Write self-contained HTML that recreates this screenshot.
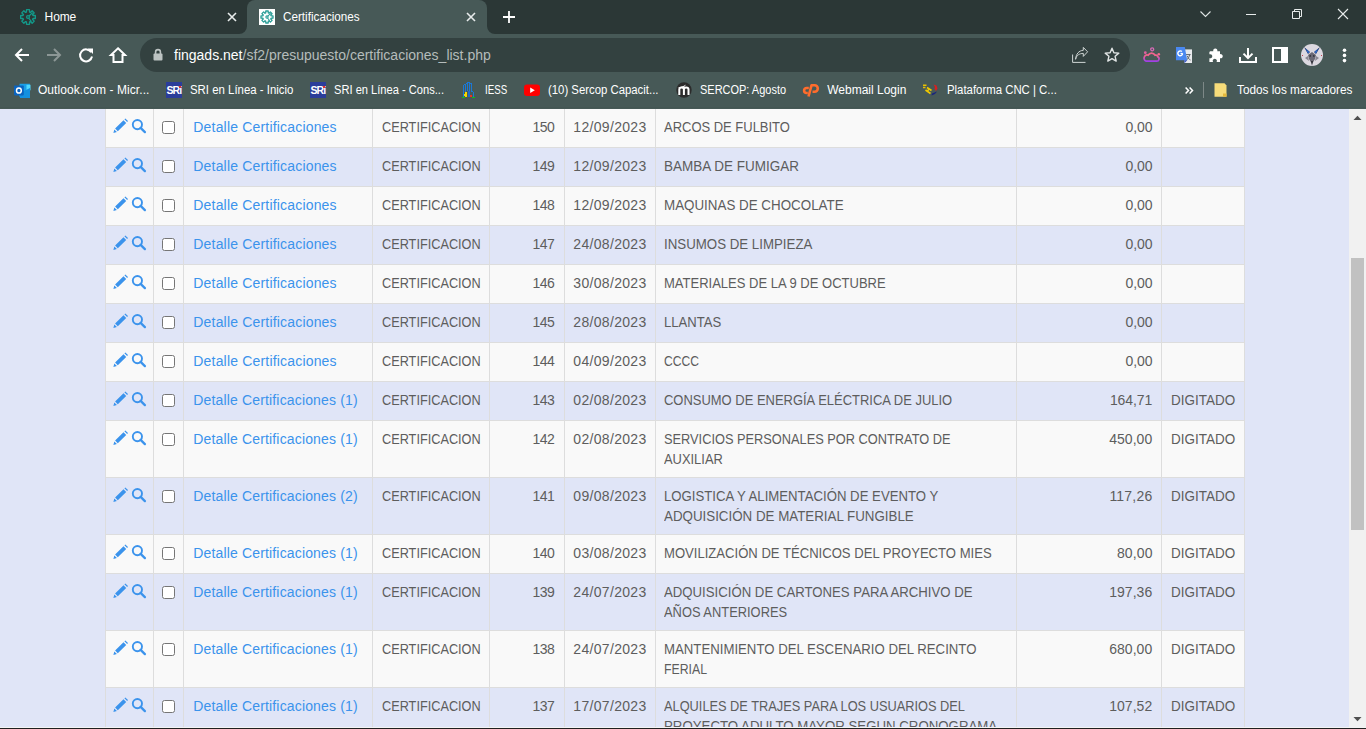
<!DOCTYPE html><html><head><meta charset="utf-8"><style>
*{margin:0;padding:0;box-sizing:border-box}
html,body{width:1366px;height:729px;overflow:hidden;background:#e0e5f7;font-family:"Liberation Sans",sans-serif}
.a{position:absolute}
.t{position:absolute;white-space:nowrap;line-height:20px;font-size:14px;color:#5d5d5d}
.u{position:absolute;white-space:nowrap;font-size:12px;line-height:16px;color:#fff}
svg{position:absolute;overflow:visible}
</style></head><body>

<div class="a" style="left:105px;top:108px;width:1140px;height:39px;background:#f9f9f9"></div>
<div class="a" style="left:105px;top:108px;width:1140px;height:1px;background:#dddddd"></div>
<div class="a" style="left:105px;top:147px;width:1140px;height:39px;background:#e0e5f7"></div>
<div class="a" style="left:105px;top:147px;width:1140px;height:1px;background:#dddddd"></div>
<div class="a" style="left:105px;top:186px;width:1140px;height:39px;background:#f9f9f9"></div>
<div class="a" style="left:105px;top:186px;width:1140px;height:1px;background:#dddddd"></div>
<div class="a" style="left:105px;top:225px;width:1140px;height:39px;background:#e0e5f7"></div>
<div class="a" style="left:105px;top:225px;width:1140px;height:1px;background:#dddddd"></div>
<div class="a" style="left:105px;top:264px;width:1140px;height:39px;background:#f9f9f9"></div>
<div class="a" style="left:105px;top:264px;width:1140px;height:1px;background:#dddddd"></div>
<div class="a" style="left:105px;top:303px;width:1140px;height:39px;background:#e0e5f7"></div>
<div class="a" style="left:105px;top:303px;width:1140px;height:1px;background:#dddddd"></div>
<div class="a" style="left:105px;top:342px;width:1140px;height:39px;background:#f9f9f9"></div>
<div class="a" style="left:105px;top:342px;width:1140px;height:1px;background:#dddddd"></div>
<div class="a" style="left:105px;top:381px;width:1140px;height:39px;background:#e0e5f7"></div>
<div class="a" style="left:105px;top:381px;width:1140px;height:1px;background:#dddddd"></div>
<div class="a" style="left:105px;top:420px;width:1140px;height:57px;background:#f9f9f9"></div>
<div class="a" style="left:105px;top:420px;width:1140px;height:1px;background:#dddddd"></div>
<div class="a" style="left:105px;top:477px;width:1140px;height:57px;background:#e0e5f7"></div>
<div class="a" style="left:105px;top:477px;width:1140px;height:1px;background:#dddddd"></div>
<div class="a" style="left:105px;top:534px;width:1140px;height:39px;background:#f9f9f9"></div>
<div class="a" style="left:105px;top:534px;width:1140px;height:1px;background:#dddddd"></div>
<div class="a" style="left:105px;top:573px;width:1140px;height:57px;background:#e0e5f7"></div>
<div class="a" style="left:105px;top:573px;width:1140px;height:1px;background:#dddddd"></div>
<div class="a" style="left:105px;top:630px;width:1140px;height:57px;background:#f9f9f9"></div>
<div class="a" style="left:105px;top:630px;width:1140px;height:1px;background:#dddddd"></div>
<div class="a" style="left:105px;top:687px;width:1140px;height:57px;background:#e0e5f7"></div>
<div class="a" style="left:105px;top:687px;width:1140px;height:1px;background:#dddddd"></div>
<div class="a" style="left:105px;top:108px;width:1px;height:640px;background:#dddddd"></div>
<div class="a" style="left:153px;top:108px;width:1px;height:640px;background:#dddddd"></div>
<div class="a" style="left:183px;top:108px;width:1px;height:640px;background:#dddddd"></div>
<div class="a" style="left:372px;top:108px;width:1px;height:640px;background:#dddddd"></div>
<div class="a" style="left:489px;top:108px;width:1px;height:640px;background:#dddddd"></div>
<div class="a" style="left:564px;top:108px;width:1px;height:640px;background:#dddddd"></div>
<div class="a" style="left:655px;top:108px;width:1px;height:640px;background:#dddddd"></div>
<div class="a" style="left:1016px;top:108px;width:1px;height:640px;background:#dddddd"></div>
<div class="a" style="left:1161px;top:108px;width:1px;height:640px;background:#dddddd"></div>
<div class="a" style="left:1244px;top:108px;width:1px;height:640px;background:#dddddd"></div>
<svg style="left:113px;top:119px" width="15" height="15" viewBox="0 0 15 15"><g transform="translate(0,-0.6)"><path d="M0.4 14.6 L1.3 11.1 L3.9 13.7 Z M2.1 10.2 L10.5 1.8 L13.2 4.5 L4.8 12.9 Z M11.4 0.9 L12.3 0 L15 2.7 L14.1 3.6 Z" fill="#3b93ec"/></g></svg>
<svg style="left:131px;top:119px" width="15" height="15" viewBox="0 0 15 15"><circle cx="6.4" cy="5.6" r="4.6" fill="none" stroke="#3b93ec" stroke-width="1.9"/><path d="M9.6 8.9 L13.9 13.1" stroke="#3b93ec" stroke-width="2.3" stroke-linecap="round"/></svg>
<div class="a" style="left:162px;top:121px;width:13px;height:13px;border:1px solid #767676;border-radius:2.5px;background:#fff"></div>
<div class="t" style="left:193.30px;top:117.15px;font-size:14px;line-height:20px;letter-spacing:0.182px;color:#3b93ec;">Detalle Certificaciones</div>
<div class="t" style="left:381.50px;top:117.15px;font-size:14px;line-height:20px;transform:scaleX(0.9083);transform-origin:0.00px 0;">CERTIFICACION</div>
<div class="t" style="left:532.40px;top:117.15px;font-size:14px;line-height:20px;letter-spacing:-0.500px;">150</div>
<div class="t" style="left:573.30px;top:117.15px;font-size:14px;line-height:20px;letter-spacing:0.322px;">12/09/2023</div>
<div class="t" style="left:664.30px;top:117.15px;font-size:14px;line-height:20px;transform:scaleX(0.9265);transform-origin:0.00px 0;">ARCOS DE FULBITO</div>
<div class="t" style="left:1125.40px;top:117.15px;font-size:14px;line-height:20px;">0,00</div>
<svg style="left:113px;top:158px" width="15" height="15" viewBox="0 0 15 15"><g transform="translate(0,-0.6)"><path d="M0.4 14.6 L1.3 11.1 L3.9 13.7 Z M2.1 10.2 L10.5 1.8 L13.2 4.5 L4.8 12.9 Z M11.4 0.9 L12.3 0 L15 2.7 L14.1 3.6 Z" fill="#3b93ec"/></g></svg>
<svg style="left:131px;top:158px" width="15" height="15" viewBox="0 0 15 15"><circle cx="6.4" cy="5.6" r="4.6" fill="none" stroke="#3b93ec" stroke-width="1.9"/><path d="M9.6 8.9 L13.9 13.1" stroke="#3b93ec" stroke-width="2.3" stroke-linecap="round"/></svg>
<div class="a" style="left:162px;top:160px;width:13px;height:13px;border:1px solid #767676;border-radius:2.5px;background:#fff"></div>
<div class="t" style="left:193.30px;top:156.15px;font-size:14px;line-height:20px;letter-spacing:0.182px;color:#3b93ec;">Detalle Certificaciones</div>
<div class="t" style="left:381.50px;top:156.15px;font-size:14px;line-height:20px;transform:scaleX(0.9083);transform-origin:0.00px 0;">CERTIFICACION</div>
<div class="t" style="left:532.40px;top:156.15px;font-size:14px;line-height:20px;letter-spacing:-0.500px;">149</div>
<div class="t" style="left:573.30px;top:156.15px;font-size:14px;line-height:20px;letter-spacing:0.322px;">12/09/2023</div>
<div class="t" style="left:664.30px;top:156.15px;font-size:14px;line-height:20px;transform:scaleX(0.9643);transform-origin:0.00px 0;">BAMBA DE FUMIGAR</div>
<div class="t" style="left:1125.40px;top:156.15px;font-size:14px;line-height:20px;">0,00</div>
<svg style="left:113px;top:197px" width="15" height="15" viewBox="0 0 15 15"><g transform="translate(0,-0.6)"><path d="M0.4 14.6 L1.3 11.1 L3.9 13.7 Z M2.1 10.2 L10.5 1.8 L13.2 4.5 L4.8 12.9 Z M11.4 0.9 L12.3 0 L15 2.7 L14.1 3.6 Z" fill="#3b93ec"/></g></svg>
<svg style="left:131px;top:197px" width="15" height="15" viewBox="0 0 15 15"><circle cx="6.4" cy="5.6" r="4.6" fill="none" stroke="#3b93ec" stroke-width="1.9"/><path d="M9.6 8.9 L13.9 13.1" stroke="#3b93ec" stroke-width="2.3" stroke-linecap="round"/></svg>
<div class="a" style="left:162px;top:199px;width:13px;height:13px;border:1px solid #767676;border-radius:2.5px;background:#fff"></div>
<div class="t" style="left:193.30px;top:195.15px;font-size:14px;line-height:20px;letter-spacing:0.182px;color:#3b93ec;">Detalle Certificaciones</div>
<div class="t" style="left:381.50px;top:195.15px;font-size:14px;line-height:20px;transform:scaleX(0.9083);transform-origin:0.00px 0;">CERTIFICACION</div>
<div class="t" style="left:532.40px;top:195.15px;font-size:14px;line-height:20px;letter-spacing:-0.500px;">148</div>
<div class="t" style="left:573.30px;top:195.15px;font-size:14px;line-height:20px;letter-spacing:0.322px;">12/09/2023</div>
<div class="t" style="left:664.30px;top:195.15px;font-size:14px;line-height:20px;transform:scaleX(0.9553);transform-origin:0.00px 0;">MAQUINAS DE CHOCOLATE</div>
<div class="t" style="left:1125.40px;top:195.15px;font-size:14px;line-height:20px;">0,00</div>
<svg style="left:113px;top:236px" width="15" height="15" viewBox="0 0 15 15"><g transform="translate(0,-0.6)"><path d="M0.4 14.6 L1.3 11.1 L3.9 13.7 Z M2.1 10.2 L10.5 1.8 L13.2 4.5 L4.8 12.9 Z M11.4 0.9 L12.3 0 L15 2.7 L14.1 3.6 Z" fill="#3b93ec"/></g></svg>
<svg style="left:131px;top:236px" width="15" height="15" viewBox="0 0 15 15"><circle cx="6.4" cy="5.6" r="4.6" fill="none" stroke="#3b93ec" stroke-width="1.9"/><path d="M9.6 8.9 L13.9 13.1" stroke="#3b93ec" stroke-width="2.3" stroke-linecap="round"/></svg>
<div class="a" style="left:162px;top:238px;width:13px;height:13px;border:1px solid #767676;border-radius:2.5px;background:#fff"></div>
<div class="t" style="left:193.30px;top:234.15px;font-size:14px;line-height:20px;letter-spacing:0.182px;color:#3b93ec;">Detalle Certificaciones</div>
<div class="t" style="left:381.50px;top:234.15px;font-size:14px;line-height:20px;transform:scaleX(0.9083);transform-origin:0.00px 0;">CERTIFICACION</div>
<div class="t" style="left:532.40px;top:234.15px;font-size:14px;line-height:20px;letter-spacing:-0.500px;">147</div>
<div class="t" style="left:573.30px;top:234.15px;font-size:14px;line-height:20px;letter-spacing:0.322px;">24/08/2023</div>
<div class="t" style="left:664.30px;top:234.15px;font-size:14px;line-height:20px;transform:scaleX(0.9490);transform-origin:0.00px 0;">INSUMOS DE LIMPIEZA</div>
<div class="t" style="left:1125.40px;top:234.15px;font-size:14px;line-height:20px;">0,00</div>
<svg style="left:113px;top:275px" width="15" height="15" viewBox="0 0 15 15"><g transform="translate(0,-0.6)"><path d="M0.4 14.6 L1.3 11.1 L3.9 13.7 Z M2.1 10.2 L10.5 1.8 L13.2 4.5 L4.8 12.9 Z M11.4 0.9 L12.3 0 L15 2.7 L14.1 3.6 Z" fill="#3b93ec"/></g></svg>
<svg style="left:131px;top:275px" width="15" height="15" viewBox="0 0 15 15"><circle cx="6.4" cy="5.6" r="4.6" fill="none" stroke="#3b93ec" stroke-width="1.9"/><path d="M9.6 8.9 L13.9 13.1" stroke="#3b93ec" stroke-width="2.3" stroke-linecap="round"/></svg>
<div class="a" style="left:162px;top:277px;width:13px;height:13px;border:1px solid #767676;border-radius:2.5px;background:#fff"></div>
<div class="t" style="left:193.30px;top:273.15px;font-size:14px;line-height:20px;letter-spacing:0.182px;color:#3b93ec;">Detalle Certificaciones</div>
<div class="t" style="left:381.50px;top:273.15px;font-size:14px;line-height:20px;transform:scaleX(0.9083);transform-origin:0.00px 0;">CERTIFICACION</div>
<div class="t" style="left:532.40px;top:273.15px;font-size:14px;line-height:20px;letter-spacing:-0.500px;">146</div>
<div class="t" style="left:573.30px;top:273.15px;font-size:14px;line-height:20px;letter-spacing:0.322px;">30/08/2023</div>
<div class="t" style="left:664.30px;top:273.15px;font-size:14px;line-height:20px;transform:scaleX(0.9289);transform-origin:0.00px 0;">MATERIALES DE LA 9 DE OCTUBRE</div>
<div class="t" style="left:1125.40px;top:273.15px;font-size:14px;line-height:20px;">0,00</div>
<svg style="left:113px;top:314px" width="15" height="15" viewBox="0 0 15 15"><g transform="translate(0,-0.6)"><path d="M0.4 14.6 L1.3 11.1 L3.9 13.7 Z M2.1 10.2 L10.5 1.8 L13.2 4.5 L4.8 12.9 Z M11.4 0.9 L12.3 0 L15 2.7 L14.1 3.6 Z" fill="#3b93ec"/></g></svg>
<svg style="left:131px;top:314px" width="15" height="15" viewBox="0 0 15 15"><circle cx="6.4" cy="5.6" r="4.6" fill="none" stroke="#3b93ec" stroke-width="1.9"/><path d="M9.6 8.9 L13.9 13.1" stroke="#3b93ec" stroke-width="2.3" stroke-linecap="round"/></svg>
<div class="a" style="left:162px;top:316px;width:13px;height:13px;border:1px solid #767676;border-radius:2.5px;background:#fff"></div>
<div class="t" style="left:193.30px;top:312.15px;font-size:14px;line-height:20px;letter-spacing:0.182px;color:#3b93ec;">Detalle Certificaciones</div>
<div class="t" style="left:381.50px;top:312.15px;font-size:14px;line-height:20px;transform:scaleX(0.9083);transform-origin:0.00px 0;">CERTIFICACION</div>
<div class="t" style="left:532.40px;top:312.15px;font-size:14px;line-height:20px;letter-spacing:-0.500px;">145</div>
<div class="t" style="left:573.30px;top:312.15px;font-size:14px;line-height:20px;letter-spacing:0.322px;">28/08/2023</div>
<div class="t" style="left:664.30px;top:312.15px;font-size:14px;line-height:20px;transform:scaleX(0.9344);transform-origin:0.00px 0;">LLANTAS</div>
<div class="t" style="left:1125.40px;top:312.15px;font-size:14px;line-height:20px;">0,00</div>
<svg style="left:113px;top:353px" width="15" height="15" viewBox="0 0 15 15"><g transform="translate(0,-0.6)"><path d="M0.4 14.6 L1.3 11.1 L3.9 13.7 Z M2.1 10.2 L10.5 1.8 L13.2 4.5 L4.8 12.9 Z M11.4 0.9 L12.3 0 L15 2.7 L14.1 3.6 Z" fill="#3b93ec"/></g></svg>
<svg style="left:131px;top:353px" width="15" height="15" viewBox="0 0 15 15"><circle cx="6.4" cy="5.6" r="4.6" fill="none" stroke="#3b93ec" stroke-width="1.9"/><path d="M9.6 8.9 L13.9 13.1" stroke="#3b93ec" stroke-width="2.3" stroke-linecap="round"/></svg>
<div class="a" style="left:162px;top:355px;width:13px;height:13px;border:1px solid #767676;border-radius:2.5px;background:#fff"></div>
<div class="t" style="left:193.30px;top:351.15px;font-size:14px;line-height:20px;letter-spacing:0.182px;color:#3b93ec;">Detalle Certificaciones</div>
<div class="t" style="left:381.50px;top:351.15px;font-size:14px;line-height:20px;transform:scaleX(0.9083);transform-origin:0.00px 0;">CERTIFICACION</div>
<div class="t" style="left:532.40px;top:351.15px;font-size:14px;line-height:20px;letter-spacing:-0.500px;">144</div>
<div class="t" style="left:573.30px;top:351.15px;font-size:14px;line-height:20px;letter-spacing:0.322px;">04/09/2023</div>
<div class="t" style="left:664.30px;top:351.15px;font-size:14px;line-height:20px;transform:scaleX(0.8625);transform-origin:0.00px 0;">CCCC</div>
<div class="t" style="left:1125.40px;top:351.15px;font-size:14px;line-height:20px;">0,00</div>
<svg style="left:113px;top:392px" width="15" height="15" viewBox="0 0 15 15"><g transform="translate(0,-0.6)"><path d="M0.4 14.6 L1.3 11.1 L3.9 13.7 Z M2.1 10.2 L10.5 1.8 L13.2 4.5 L4.8 12.9 Z M11.4 0.9 L12.3 0 L15 2.7 L14.1 3.6 Z" fill="#3b93ec"/></g></svg>
<svg style="left:131px;top:392px" width="15" height="15" viewBox="0 0 15 15"><circle cx="6.4" cy="5.6" r="4.6" fill="none" stroke="#3b93ec" stroke-width="1.9"/><path d="M9.6 8.9 L13.9 13.1" stroke="#3b93ec" stroke-width="2.3" stroke-linecap="round"/></svg>
<div class="a" style="left:162px;top:394px;width:13px;height:13px;border:1px solid #767676;border-radius:2.5px;background:#fff"></div>
<div class="t" style="left:193.30px;top:390.15px;font-size:14px;line-height:20px;letter-spacing:0.154px;color:#3b93ec;">Detalle Certificaciones (1)</div>
<div class="t" style="left:381.50px;top:390.15px;font-size:14px;line-height:20px;transform:scaleX(0.9083);transform-origin:0.00px 0;">CERTIFICACION</div>
<div class="t" style="left:532.40px;top:390.15px;font-size:14px;line-height:20px;letter-spacing:-0.500px;">143</div>
<div class="t" style="left:573.30px;top:390.15px;font-size:14px;line-height:20px;letter-spacing:0.322px;">02/08/2023</div>
<div class="t" style="left:664.30px;top:390.15px;font-size:14px;line-height:20px;transform:scaleX(0.9260);transform-origin:0.00px 0;">CONSUMO DE ENERGÍA ELÉCTRICA DE JULIO</div>
<div class="t" style="left:1109.90px;top:390.15px;font-size:14px;line-height:20px;letter-spacing:-0.100px;">164,71</div>
<div class="t" style="left:1170.50px;top:390.15px;font-size:14px;line-height:20px;transform:scaleX(0.9627);transform-origin:0.00px 0;">DIGITADO</div>
<svg style="left:113px;top:431px" width="15" height="15" viewBox="0 0 15 15"><g transform="translate(0,-0.6)"><path d="M0.4 14.6 L1.3 11.1 L3.9 13.7 Z M2.1 10.2 L10.5 1.8 L13.2 4.5 L4.8 12.9 Z M11.4 0.9 L12.3 0 L15 2.7 L14.1 3.6 Z" fill="#3b93ec"/></g></svg>
<svg style="left:131px;top:431px" width="15" height="15" viewBox="0 0 15 15"><circle cx="6.4" cy="5.6" r="4.6" fill="none" stroke="#3b93ec" stroke-width="1.9"/><path d="M9.6 8.9 L13.9 13.1" stroke="#3b93ec" stroke-width="2.3" stroke-linecap="round"/></svg>
<div class="a" style="left:162px;top:433px;width:13px;height:13px;border:1px solid #767676;border-radius:2.5px;background:#fff"></div>
<div class="t" style="left:193.30px;top:429.15px;font-size:14px;line-height:20px;letter-spacing:0.154px;color:#3b93ec;">Detalle Certificaciones (1)</div>
<div class="t" style="left:381.50px;top:429.15px;font-size:14px;line-height:20px;transform:scaleX(0.9083);transform-origin:0.00px 0;">CERTIFICACION</div>
<div class="t" style="left:532.40px;top:429.15px;font-size:14px;line-height:20px;letter-spacing:-0.500px;">142</div>
<div class="t" style="left:573.30px;top:429.15px;font-size:14px;line-height:20px;letter-spacing:0.322px;">02/08/2023</div>
<div class="t" style="left:664.30px;top:429.15px;font-size:14px;line-height:20px;transform:scaleX(0.9140);transform-origin:0.00px 0;">SERVICIOS PERSONALES POR CONTRATO DE</div>
<div class="t" style="left:664.30px;top:449.15px;font-size:14px;line-height:20px;transform:scaleX(0.9219);transform-origin:0.00px 0;">AUXILIAR</div>
<div class="t" style="left:1109.20px;top:429.15px;font-size:14px;line-height:20px;letter-spacing:0.040px;">450,00</div>
<div class="t" style="left:1170.50px;top:429.15px;font-size:14px;line-height:20px;transform:scaleX(0.9627);transform-origin:0.00px 0;">DIGITADO</div>
<svg style="left:113px;top:488px" width="15" height="15" viewBox="0 0 15 15"><g transform="translate(0,-0.6)"><path d="M0.4 14.6 L1.3 11.1 L3.9 13.7 Z M2.1 10.2 L10.5 1.8 L13.2 4.5 L4.8 12.9 Z M11.4 0.9 L12.3 0 L15 2.7 L14.1 3.6 Z" fill="#3b93ec"/></g></svg>
<svg style="left:131px;top:488px" width="15" height="15" viewBox="0 0 15 15"><circle cx="6.4" cy="5.6" r="4.6" fill="none" stroke="#3b93ec" stroke-width="1.9"/><path d="M9.6 8.9 L13.9 13.1" stroke="#3b93ec" stroke-width="2.3" stroke-linecap="round"/></svg>
<div class="a" style="left:162px;top:490px;width:13px;height:13px;border:1px solid #767676;border-radius:2.5px;background:#fff"></div>
<div class="t" style="left:193.30px;top:486.15px;font-size:14px;line-height:20px;letter-spacing:0.154px;color:#3b93ec;">Detalle Certificaciones (2)</div>
<div class="t" style="left:381.50px;top:486.15px;font-size:14px;line-height:20px;transform:scaleX(0.9083);transform-origin:0.00px 0;">CERTIFICACION</div>
<div class="t" style="left:532.40px;top:486.15px;font-size:14px;line-height:20px;letter-spacing:-0.500px;">141</div>
<div class="t" style="left:573.30px;top:486.15px;font-size:14px;line-height:20px;letter-spacing:0.322px;">09/08/2023</div>
<div class="t" style="left:664.30px;top:486.15px;font-size:14px;line-height:20px;transform:scaleX(0.9418);transform-origin:0.00px 0;">LOGISTICA Y ALIMENTACIÓN DE EVENTO Y</div>
<div class="t" style="left:664.30px;top:506.15px;font-size:14px;line-height:20px;transform:scaleX(0.9527);transform-origin:0.00px 0;">ADQUISICIÓN DE MATERIAL FUNGIBLE</div>
<div class="t" style="left:1109.40px;top:486.15px;font-size:14px;line-height:20px;letter-spacing:0.200px;">117,26</div>
<div class="t" style="left:1170.50px;top:486.15px;font-size:14px;line-height:20px;transform:scaleX(0.9627);transform-origin:0.00px 0;">DIGITADO</div>
<svg style="left:113px;top:545px" width="15" height="15" viewBox="0 0 15 15"><g transform="translate(0,-0.6)"><path d="M0.4 14.6 L1.3 11.1 L3.9 13.7 Z M2.1 10.2 L10.5 1.8 L13.2 4.5 L4.8 12.9 Z M11.4 0.9 L12.3 0 L15 2.7 L14.1 3.6 Z" fill="#3b93ec"/></g></svg>
<svg style="left:131px;top:545px" width="15" height="15" viewBox="0 0 15 15"><circle cx="6.4" cy="5.6" r="4.6" fill="none" stroke="#3b93ec" stroke-width="1.9"/><path d="M9.6 8.9 L13.9 13.1" stroke="#3b93ec" stroke-width="2.3" stroke-linecap="round"/></svg>
<div class="a" style="left:162px;top:547px;width:13px;height:13px;border:1px solid #767676;border-radius:2.5px;background:#fff"></div>
<div class="t" style="left:193.30px;top:543.15px;font-size:14px;line-height:20px;letter-spacing:0.154px;color:#3b93ec;">Detalle Certificaciones (1)</div>
<div class="t" style="left:381.50px;top:543.15px;font-size:14px;line-height:20px;transform:scaleX(0.9083);transform-origin:0.00px 0;">CERTIFICACION</div>
<div class="t" style="left:532.40px;top:543.15px;font-size:14px;line-height:20px;letter-spacing:-0.500px;">140</div>
<div class="t" style="left:573.30px;top:543.15px;font-size:14px;line-height:20px;letter-spacing:0.322px;">03/08/2023</div>
<div class="t" style="left:664.30px;top:543.15px;font-size:14px;line-height:20px;transform:scaleX(0.9345);transform-origin:0.00px 0;">MOVILIZACIÓN DE TÉCNICOS DEL PROYECTO MIES</div>
<div class="t" style="left:1116.90px;top:543.15px;font-size:14px;line-height:20px;letter-spacing:0.125px;">80,00</div>
<div class="t" style="left:1170.50px;top:543.15px;font-size:14px;line-height:20px;transform:scaleX(0.9627);transform-origin:0.00px 0;">DIGITADO</div>
<svg style="left:113px;top:584px" width="15" height="15" viewBox="0 0 15 15"><g transform="translate(0,-0.6)"><path d="M0.4 14.6 L1.3 11.1 L3.9 13.7 Z M2.1 10.2 L10.5 1.8 L13.2 4.5 L4.8 12.9 Z M11.4 0.9 L12.3 0 L15 2.7 L14.1 3.6 Z" fill="#3b93ec"/></g></svg>
<svg style="left:131px;top:584px" width="15" height="15" viewBox="0 0 15 15"><circle cx="6.4" cy="5.6" r="4.6" fill="none" stroke="#3b93ec" stroke-width="1.9"/><path d="M9.6 8.9 L13.9 13.1" stroke="#3b93ec" stroke-width="2.3" stroke-linecap="round"/></svg>
<div class="a" style="left:162px;top:586px;width:13px;height:13px;border:1px solid #767676;border-radius:2.5px;background:#fff"></div>
<div class="t" style="left:193.30px;top:582.15px;font-size:14px;line-height:20px;letter-spacing:0.154px;color:#3b93ec;">Detalle Certificaciones (1)</div>
<div class="t" style="left:381.50px;top:582.15px;font-size:14px;line-height:20px;transform:scaleX(0.9083);transform-origin:0.00px 0;">CERTIFICACION</div>
<div class="t" style="left:532.40px;top:582.15px;font-size:14px;line-height:20px;letter-spacing:-0.500px;">139</div>
<div class="t" style="left:573.30px;top:582.15px;font-size:14px;line-height:20px;letter-spacing:0.322px;">24/07/2023</div>
<div class="t" style="left:664.30px;top:582.15px;font-size:14px;line-height:20px;transform:scaleX(0.9421);transform-origin:0.00px 0;">ADQUISICIÓN DE CARTONES PARA ARCHIVO DE</div>
<div class="t" style="left:664.30px;top:602.15px;font-size:14px;line-height:20px;transform:scaleX(0.9201);transform-origin:0.00px 0;">AÑOS ANTERIORES</div>
<div class="t" style="left:1109.20px;top:582.15px;font-size:14px;line-height:20px;letter-spacing:0.040px;">197,36</div>
<div class="t" style="left:1170.50px;top:582.15px;font-size:14px;line-height:20px;transform:scaleX(0.9627);transform-origin:0.00px 0;">DIGITADO</div>
<svg style="left:113px;top:641px" width="15" height="15" viewBox="0 0 15 15"><g transform="translate(0,-0.6)"><path d="M0.4 14.6 L1.3 11.1 L3.9 13.7 Z M2.1 10.2 L10.5 1.8 L13.2 4.5 L4.8 12.9 Z M11.4 0.9 L12.3 0 L15 2.7 L14.1 3.6 Z" fill="#3b93ec"/></g></svg>
<svg style="left:131px;top:641px" width="15" height="15" viewBox="0 0 15 15"><circle cx="6.4" cy="5.6" r="4.6" fill="none" stroke="#3b93ec" stroke-width="1.9"/><path d="M9.6 8.9 L13.9 13.1" stroke="#3b93ec" stroke-width="2.3" stroke-linecap="round"/></svg>
<div class="a" style="left:162px;top:643px;width:13px;height:13px;border:1px solid #767676;border-radius:2.5px;background:#fff"></div>
<div class="t" style="left:193.30px;top:639.15px;font-size:14px;line-height:20px;letter-spacing:0.154px;color:#3b93ec;">Detalle Certificaciones (1)</div>
<div class="t" style="left:381.50px;top:639.15px;font-size:14px;line-height:20px;transform:scaleX(0.9083);transform-origin:0.00px 0;">CERTIFICACION</div>
<div class="t" style="left:532.40px;top:639.15px;font-size:14px;line-height:20px;letter-spacing:-0.500px;">138</div>
<div class="t" style="left:573.30px;top:639.15px;font-size:14px;line-height:20px;letter-spacing:0.322px;">24/07/2023</div>
<div class="t" style="left:664.30px;top:639.15px;font-size:14px;line-height:20px;transform:scaleX(0.9428);transform-origin:0.00px 0;">MANTENIMIENTO DEL ESCENARIO DEL RECINTO</div>
<div class="t" style="left:664.30px;top:659.15px;font-size:14px;line-height:20px;transform:scaleX(0.8776);transform-origin:0.00px 0;">FERIAL</div>
<div class="t" style="left:1109.20px;top:639.15px;font-size:14px;line-height:20px;letter-spacing:0.040px;">680,00</div>
<div class="t" style="left:1170.50px;top:639.15px;font-size:14px;line-height:20px;transform:scaleX(0.9627);transform-origin:0.00px 0;">DIGITADO</div>
<svg style="left:113px;top:698px" width="15" height="15" viewBox="0 0 15 15"><g transform="translate(0,-0.6)"><path d="M0.4 14.6 L1.3 11.1 L3.9 13.7 Z M2.1 10.2 L10.5 1.8 L13.2 4.5 L4.8 12.9 Z M11.4 0.9 L12.3 0 L15 2.7 L14.1 3.6 Z" fill="#3b93ec"/></g></svg>
<svg style="left:131px;top:698px" width="15" height="15" viewBox="0 0 15 15"><circle cx="6.4" cy="5.6" r="4.6" fill="none" stroke="#3b93ec" stroke-width="1.9"/><path d="M9.6 8.9 L13.9 13.1" stroke="#3b93ec" stroke-width="2.3" stroke-linecap="round"/></svg>
<div class="a" style="left:162px;top:700px;width:13px;height:13px;border:1px solid #767676;border-radius:2.5px;background:#fff"></div>
<div class="t" style="left:193.30px;top:696.15px;font-size:14px;line-height:20px;letter-spacing:0.154px;color:#3b93ec;">Detalle Certificaciones (1)</div>
<div class="t" style="left:381.50px;top:696.15px;font-size:14px;line-height:20px;transform:scaleX(0.9083);transform-origin:0.00px 0;">CERTIFICACION</div>
<div class="t" style="left:532.40px;top:696.15px;font-size:14px;line-height:20px;letter-spacing:-0.500px;">137</div>
<div class="t" style="left:573.30px;top:696.15px;font-size:14px;line-height:20px;letter-spacing:0.322px;">17/07/2023</div>
<div class="t" style="left:664.30px;top:696.15px;font-size:14px;line-height:20px;transform:scaleX(0.9136);transform-origin:0.00px 0;">ALQUILES DE TRAJES PARA LOS USUARIOS DEL</div>
<div class="t" style="left:664.30px;top:716.15px;font-size:14px;line-height:20px;transform:scaleX(0.9462);transform-origin:0.00px 0;">PROYECTO ADULTO MAYOR SEGUN CRONOGRAMA</div>
<div class="t" style="left:1109.20px;top:696.15px;font-size:14px;line-height:20px;letter-spacing:0.040px;">107,52</div>
<div class="t" style="left:1170.50px;top:696.15px;font-size:14px;line-height:20px;transform:scaleX(0.9627);transform-origin:0.00px 0;">DIGITADO</div>
<div class="a" style="left:1349px;top:109px;width:17px;height:620px;background:#f1f1f1"></div>
<div class="a" style="left:1351px;top:258px;width:13px;height:272px;background:#c1c1c1"></div>
<svg style="left:1349px;top:109px" width="17" height="17"><path d="M4.5 11 L8.5 6.8 L12.5 11 Z" fill="#505050"/></svg>
<svg style="left:1349px;top:711px" width="17" height="17"><path d="M4.5 6 L8.5 10.2 L12.5 6 Z" fill="#505050"/></svg>
<div class="a" style="left:0;top:727px;width:1366px;height:1px;background:#f4f4f4"></div>
<div class="a" style="left:0;top:728px;width:1366px;height:1px;background:#202020"></div>
<div class="a" style="left:0;top:0;width:1366px;height:34px;background:#2b3736"></div>
<div class="a" style="left:0;top:34px;width:1366px;height:75px;background:#475957"></div>
<div class="a" style="left:0;top:107px;width:1366px;height:1px;background:#445653"></div>
<div class="a" style="left:247px;top:0;width:240px;height:34px;background:#475957;border-radius:8px 8px 0 0"></div>
<svg style="left:239px;top:26px" width="8" height="8"><path d="M0 8 A8 8 0 0 0 8 0 L8 8 Z" fill="#475957"/></svg>
<svg style="left:487px;top:26px" width="8" height="8"><path d="M8 8 A8 8 0 0 1 0 0 L0 8 Z" fill="#475957"/></svg>
<svg style="left:20px;top:9px" width="16" height="16" viewBox="0 0 16 16"><path d="M6.46 3.03 L6.51 0.65 L9.49 0.65 L9.54 3.03 L10.43 3.40 L12.14 1.75 L14.25 3.86 L12.60 5.57 L12.97 6.46 L15.35 6.51 L15.35 9.49 L12.97 9.54 L12.60 10.43 L14.25 12.14 L12.14 14.25 L10.43 12.60 L9.54 12.97 L9.49 15.35 L6.51 15.35 L6.46 12.97 L5.57 12.60 L3.86 14.25 L1.75 12.14 L3.40 10.43 L3.03 9.54 L0.65 9.49 L0.65 6.51 L3.03 6.46 L3.40 5.57 L1.75 3.86 L3.86 1.75 L5.57 3.40 Z" fill="none" stroke="#139889" stroke-width="1.35" stroke-linejoin="round"/><circle cx="8" cy="8" r="1.4" fill="none" stroke="#139889" stroke-width="1.3"/><path d="M9 7 L12.6 3.6 M8.6 9.2 L11.5 12.6" stroke="#139889" stroke-width="1.3"/></svg>
<div class="a" style="left:259px;top:9px;width:16px;height:16px;background:#fff"></div>
<svg style="left:259px;top:9px" width="16" height="16" viewBox="-1.8 -1.8 19.6 19.6"><path d="M6.46 3.03 L6.51 0.65 L9.49 0.65 L9.54 3.03 L10.43 3.40 L12.14 1.75 L14.25 3.86 L12.60 5.57 L12.97 6.46 L15.35 6.51 L15.35 9.49 L12.97 9.54 L12.60 10.43 L14.25 12.14 L12.14 14.25 L10.43 12.60 L9.54 12.97 L9.49 15.35 L6.51 15.35 L6.46 12.97 L5.57 12.60 L3.86 14.25 L1.75 12.14 L3.40 10.43 L3.03 9.54 L0.65 9.49 L0.65 6.51 L3.03 6.46 L3.40 5.57 L1.75 3.86 L3.86 1.75 L5.57 3.40 Z" fill="none" stroke="#2a9d97" stroke-width="1.6" stroke-linejoin="round"/><circle cx="8" cy="8" r="1.4" fill="none" stroke="#2a9d97" stroke-width="1.3"/><path d="M9 7 L12.6 3.6 M8.6 9.2 L11.5 12.6" stroke="#2a9d97" stroke-width="1.3"/></svg>
<div class="u" style="left:44.60px;top:8.84px;font-size:12px;line-height:16px;letter-spacing:-0.133px;color:#ffffff;">Home</div>
<div class="u" style="left:282.80px;top:8.84px;font-size:12px;line-height:16px;transform:scaleX(0.9747);transform-origin:0.00px 0;color:#ffffff;">Certificaciones</div>
<svg style="left:228.0px;top:13.0px" width="8" height="8"><path d="M0 0 L8 8 M8 0 L0 8" stroke="#e8ecec" stroke-width="1.6"/></svg>
<svg style="left:467.0px;top:13.0px" width="8" height="8"><path d="M0 0 L8 8 M8 0 L0 8" stroke="#e8ecec" stroke-width="1.6"/></svg>
<svg style="left:503px;top:11px" width="12" height="12"><path d="M6 0 V12 M0 6 H12" stroke="#fff" stroke-width="1.8"/></svg>
<svg style="left:1200px;top:11px" width="11" height="7"><path d="M0.5 0.5 L5.5 5.5 L10.5 0.5" fill="none" stroke="#dfe5e4" stroke-width="1.1"/></svg>
<div class="a" style="left:1246px;top:14px;width:10px;height:1px;background:#e8ecec"></div>
<svg style="left:1292px;top:9px" width="10" height="10"><path d="M0.5 2.5 H7.5 V9.5 H0.5 Z M2.5 2.5 V0.5 H9.5 V7.5 H7.5" fill="none" stroke="#e8ecec" stroke-width="1"/></svg>
<svg style="left:1338px;top:9px" width="10" height="10"><path d="M0 0 L10 10 M10 0 L0 10" stroke="#e8ecec" stroke-width="1.1"/></svg>
<svg style="left:15px;top:48px" width="14" height="14"><path d="M14 7 H1.5 M7 1 L1 7 L7 13" fill="none" stroke="#fff" stroke-width="2"/></svg>
<svg style="left:47px;top:48px" width="14" height="14"><path d="M0 7 H12.5 M7 1 L13 7 L7 13" fill="none" stroke="#8c9796" stroke-width="2"/></svg>
<svg style="left:79px;top:48px" width="15" height="15"><path d="M12.2 4.2 A6 6 0 1 0 13 8.5" fill="none" stroke="#fff" stroke-width="2"/><path d="M8.5 0.5 H14 V6 Z" fill="#fff"/></svg>
<svg style="left:110px;top:47px" width="16" height="16"><path d="M8 1.3 L15 8 H12.5 V15 H3.5 V8 H1 Z" fill="none" stroke="#fff" stroke-width="2" stroke-linejoin="miter"/></svg>
<div class="a" style="left:140px;top:38px;width:990px;height:34px;border-radius:17px;background:#334140"></div>
<svg style="left:153px;top:48px" width="10" height="13"><path d="M2.6 6 V4 A2.4 2.4 0 0 1 7.4 4 V6" fill="none" stroke="#bcc3c2" stroke-width="1.6"/><rect x="0.5" y="5.5" width="9" height="7" rx="1" fill="#bcc3c2"/></svg>
<div class="a" style="left:174px;top:45px;font-size:14px;line-height:20px;white-space:nowrap;color:#b5bcbb"><span style="color:#fff">fingads.net</span>/sf2/presupuesto/certificaciones_list.php</div>
<svg style="left:1072px;top:47px" width="17" height="16"><path d="M0.6 7.5 V15.4 H13.5" fill="none" stroke="#cfd5d4" stroke-width="1"/><path d="M3.6 12.3 C4.3 8.3 7.5 6.4 11.3 6.4 V9.4 L15.6 4.8 L11.3 0.4 V3.3 C6.8 3.6 4 7 3.6 12.3 Z" fill="none" stroke="#cfd5d4" stroke-width="1" stroke-linejoin="round"/></svg>
<svg style="left:1104px;top:47px" width="16" height="16"><path d="M8 1.2 L9.9 5.7 L14.8 6.1 L11.1 9.3 L12.2 14.1 L8 11.6 L3.8 14.1 L4.9 9.3 L1.2 6.1 L6.1 5.7 Z" fill="none" stroke="#e0e4e4" stroke-width="1.4" stroke-linejoin="round"/></svg>
<svg style="left:1143px;top:46px" width="18" height="17" viewBox="0 0 18 17"><defs><linearGradient id="cg" x1="0" y1="0" x2="0" y2="1"><stop offset="0.3" stop-color="#f2648e"/><stop offset="1" stop-color="#a040e8"/></linearGradient></defs><path d="M3.2 15.2 H13.6 A2.4 2.4 0 0 0 14.6 10.6 A2 2 0 0 0 12 9.2 A3.8 3.8 0 0 0 5.2 9.2 A2.6 2.6 0 0 0 3.2 15.2 Z" fill="none" stroke="url(#cg)" stroke-width="1.7"/><circle cx="9.2" cy="3.3" r="1.5" fill="none" stroke="#d86ab8" stroke-width="1.3"/><circle cx="2.3" cy="6.7" r="1.4" fill="#e060a0"/><circle cx="15.8" cy="8.2" r="1.3" fill="#f06a90"/></svg>
<svg style="left:1175px;top:47px" width="18" height="17"><rect x="9.4" y="2.4" width="7.6" height="13.6" fill="#e8eaed"/><path d="M11 7.6 H15.6 M12.4 9 C13 11 14 12.3 15.5 13 M14.6 7.6 C14.2 10 13 12 11.4 13.2" stroke="#5f6368" stroke-width="1" fill="none"/><path d="M1 0 H9.8 L12.2 13.2 H1 Z" fill="#4a88f0"/><path d="M7.6 6.7 A2.4 2.4 0 1 1 6.9 4.6" fill="none" stroke="#fff" stroke-width="1.4"/><path d="M5.5 6.5 H7.8" stroke="#fff" stroke-width="1.2"/><path d="M9.2 13.2 L12.2 13.2 L9.6 16 Z" fill="#3050c8"/></svg>
<svg style="left:1208px;top:47px" width="16" height="16" viewBox="0 0 16 16"><path d="M2.2 4.2 H5.3 A2.1 2.1 0 1 1 9.3 4.2 H12 V7.2 A2.1 2.1 0 1 1 12 11.2 V15 H8.6 A2.1 2.1 0 1 0 5 15 H1.4 V11.2 A2.1 2.1 0 1 0 1.4 7.3 V5 Z" fill="#fff"/></svg>
<svg style="left:1239px;top:48px" width="18" height="15"><path d="M9 0 V10 M4.5 5.6 L9 10.1 L13.5 5.6" fill="none" stroke="#fff" stroke-width="2"/><path d="M1 9 V14 H17 V9" fill="none" stroke="#fff" stroke-width="2"/></svg>
<svg style="left:1272px;top:47px" width="16" height="16"><rect x="1" y="1" width="14" height="14" fill="none" stroke="#fff" stroke-width="2"/><rect x="9" y="1" width="6" height="14" fill="#fff"/></svg>
<svg style="left:1301px;top:44px" width="22" height="22"><defs><clipPath id="avc"><circle cx="11" cy="11" r="11"/></clipPath></defs><g clip-path="url(#avc)"><rect width="22" height="22" fill="#dcd8e0"/><path d="M3 3 L9 8 L7 10 Z M19 3 L13 8 L15 10 Z" fill="#1a2a60"/><path d="M4.5 4.5 L8.5 8 L7 9.5 Z M17.5 4.5 L13.5 8 L15 9.5 Z" fill="#2f6fd0"/><path d="M7 11 L11 8 L15 11 L14 15 L11 20 L8 15 Z" fill="#6a6874"/><path d="M8 12 L10 11 L9.5 13 Z M14 12 L12 11 L12.5 13 Z" fill="#202028"/><path d="M4 14 L7 12 L8 17 Z M18 14 L15 12 L14 17 Z" fill="#8a8892"/><path d="M10 17 L11 22 L12 17 Z" fill="#303038"/><path d="M1 11 L2 12 M21 11 L20 12" stroke="#c04050" stroke-width="1"/></g></svg>
<svg style="left:1342px;top:48px" width="5" height="15"><circle cx="2.5" cy="2.2" r="1.8" fill="#fff"/><circle cx="2.5" cy="7.4" r="1.8" fill="#fff"/><circle cx="2.5" cy="12.6" r="1.8" fill="#fff"/></svg>
<svg style="left:14px;top:82px" width="16" height="16"><path d="M6.5 2 H18.5 V17 H6 Z" fill="#1aa0e8" transform="scale(0.86)"/><rect x="12.5" y="2.8" width="4" height="5.5" fill="#50d9ff"/><path d="M6 11 L16 6 V16 H6 Z" fill="#1490df"/><rect x="0" y="3.6" width="9.8" height="9.8" rx="0.8" fill="#0a64c0"/><ellipse cx="4.9" cy="8.5" rx="2.4" ry="2.6" fill="none" stroke="#fff" stroke-width="1.5"/></svg>
<div class="u" style="left:37.90px;top:82.04px;font-size:12px;line-height:16px;letter-spacing:0.075px;color:#ffffff;">Outlook.com - Micr...</div>
<div class="a" style="left:166px;top:82px;width:16px;height:16px;background:#2b3d9a;color:#fff;font-size:10.5px;font-weight:bold;line-height:16px;text-align:left;padding-left:0.5px;letter-spacing:-0.9px;font-family:'Liberation Sans',sans-serif">SRi<span style="position:absolute;left:12.6px;top:4px;width:2px;height:2px;background:#e03030"></span></div>
<div class="u" style="left:189.70px;top:82.04px;font-size:12px;line-height:16px;transform:scaleX(0.9514);transform-origin:0.00px 0;color:#ffffff;">SRI en Línea - Inicio</div>
<div class="a" style="left:310px;top:82px;width:16px;height:16px;background:#2b3d9a;color:#fff;font-size:10.5px;font-weight:bold;line-height:16px;text-align:left;padding-left:0.5px;letter-spacing:-0.9px;font-family:'Liberation Sans',sans-serif">SRi<span style="position:absolute;left:12.6px;top:4px;width:2px;height:2px;background:#e03030"></span></div>
<div class="u" style="left:333.70px;top:82.04px;font-size:12px;line-height:16px;transform:scaleX(0.9269);transform-origin:0.00px 0;color:#ffffff;">SRI en Línea - Cons...</div>
<svg style="left:461px;top:81px" width="16" height="17" shape-rendering="crispEdges"><rect x="2" y="4" width="1" height="13" fill="#1a78d8"/><rect x="3" y="3" width="1" height="1" fill="#1a78d8"/><rect x="4" y="3" width="1" height="8" fill="#1a78d8"/><rect x="5" y="2" width="1" height="1" fill="#1a78d8"/><rect x="6" y="1" width="1" height="9" fill="#1a78d8"/><rect x="7" y="1" width="1" height="1" fill="#1a78d8"/><rect x="8" y="1" width="1" height="10" fill="#1a78d8"/><rect x="9" y="2" width="1" height="1" fill="#1a78d8"/><rect x="10" y="2" width="1" height="9" fill="#1a78d8"/><rect x="11" y="10" width="1" height="1" fill="#1a78d8"/><rect x="12" y="11" width="1" height="6" fill="#1a78d8"/><rect x="7" y="10" width="2" height="6" fill="#2068c8"/><rect x="4" y="11" width="2" height="5" fill="#f5d800"/><rect x="3" y="13" width="2" height="2" fill="#f5d800"/><rect x="5" y="15" width="1" height="1" fill="#f5d800"/><rect x="9" y="14" width="2" height="2" fill="#f03020"/><rect x="1" y="16" width="3" height="1" fill="#10c010"/><rect x="11" y="16" width="3" height="1" fill="#10c010"/></svg>
<div class="u" style="left:485.00px;top:82.04px;font-size:12px;line-height:16px;transform:scaleX(0.8148);transform-origin:0.00px 0;color:#ffffff;">IESS</div>
<svg style="left:524px;top:83px" width="16" height="14"><rect x="0" y="1.5" width="16" height="11.5" rx="3" fill="#ff0000"/><path d="M6.2 4.4 L10.8 7.25 L6.2 10.1 Z" fill="#fff"/></svg>
<div class="u" style="left:548.00px;top:82.04px;font-size:12px;line-height:16px;transform:scaleX(0.9462);transform-origin:0.00px 0;color:#ffffff;">(10) Sercop Capacit...</div>
<svg style="left:676px;top:82px" width="16" height="16"><circle cx="8" cy="8" r="7.7" fill="#2b2b2b"/><path d="M3.3 13 V7.6 Q3.3 5.6 5.6 5.6 Q7.9 5.6 7.9 7.6 V13 M7.9 7.6 Q7.9 5.6 10.2 5.6 Q12.5 5.6 12.5 7.6 V13" fill="none" stroke="#fff" stroke-width="2"/><path d="M1.5 6 L8 3.8 L9.8 2.6 L8.8 4.6 L5 6 Z" fill="#fff"/></svg>
<div class="u" style="left:699.90px;top:82.04px;font-size:12px;line-height:16px;transform:scaleX(0.9149);transform-origin:0.00px 0;color:#ffffff;">SERCOP: Agosto</div>
<svg style="left:802px;top:82px" width="18" height="16"><path d="M6.8 6 H4.6 A2.5 2.5 0 0 0 4.6 11 H5.8" fill="none" stroke="#ff6c2c" stroke-width="2.6"/><path d="M6.5 14.5 L9.5 3.3 H12.6 A3.2 3.2 0 0 1 12.6 9.7 H10.5" fill="none" stroke="#ff6c2c" stroke-width="2.6" stroke-linejoin="round"/></svg>
<div class="u" style="left:827.20px;top:82.04px;font-size:12px;line-height:16px;color:#ffffff;">Webmail Login</div>
<svg style="left:922px;top:82px" width="17" height="16"><path d="M1 3.2 H4.5 M1 5.5 H3.5" stroke="#e8c000" stroke-width="1.5"/><path d="M5 5.5 L9.5 8.5 M3.5 8 L8.5 11.5 M7 6.5 L5.5 9.5" stroke="#f0c800" stroke-width="1.6"/><path d="M11.5 2.5 L14.5 3.5 L15.5 6.5 L14 9 L12.5 7 L13 5 Z" fill="#d82020"/><path d="M10 11.5 L15 9.5 L13 12 L9.5 13.5 Z" fill="#1a237e"/></svg>
<div class="u" style="left:947.20px;top:82.04px;font-size:12px;line-height:16px;transform:scaleX(0.9483);transform-origin:0.00px 0;color:#ffffff;">Plataforma CNC | C...</div>
<svg style="left:1185px;top:87px" width="9" height="7"><path d="M0.6 0.5 L3.5 3.5 L0.6 6.5 M4.6 0.5 L7.5 3.5 L4.6 6.5" fill="none" stroke="#fff" stroke-width="1.5"/></svg>
<div class="a" style="left:1203px;top:82px;width:1px;height:16px;background:#7d8887"></div>
<svg style="left:1214px;top:83px" width="14" height="14"><path d="M0.5 0.3 H10.5 L12.5 2.5 V13.7 H0.5 Z" fill="#f7dc7a"/><path d="M9 10.5 H12.5 V13.7 H9 Z" fill="#e5b83a"/></svg>
<div class="u" style="left:1236.90px;top:82.04px;font-size:12px;line-height:16px;transform:scaleX(0.9829);transform-origin:0.00px 0;color:#ffffff;">Todos los marcadores</div>
</body></html>
